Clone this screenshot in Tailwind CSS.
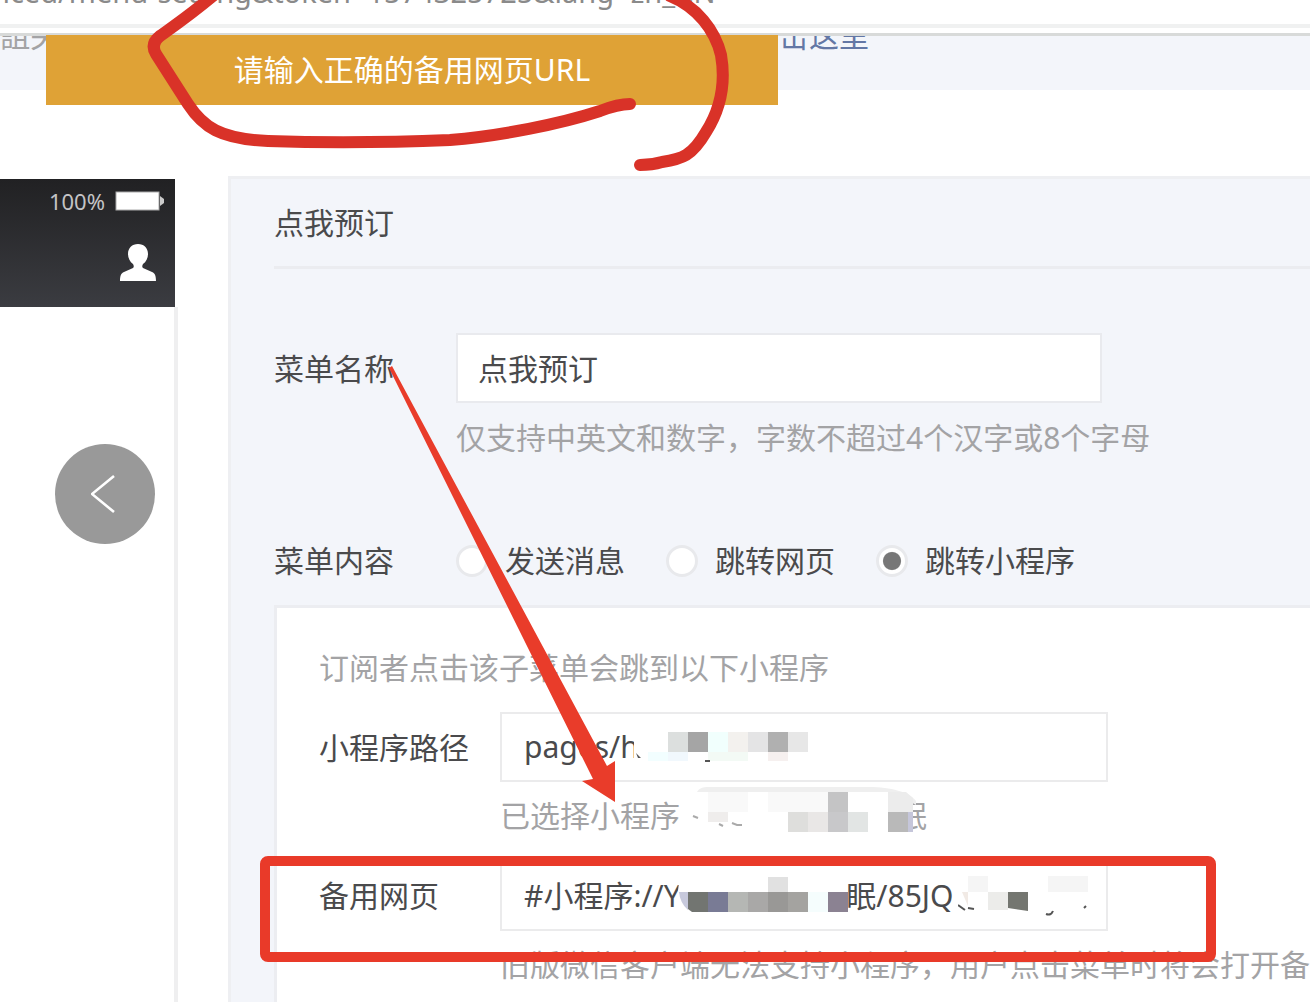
<!DOCTYPE html>
<html lang="zh-CN">
<head>
<meta charset="utf-8">
<title>自定义菜单</title>
<script src="https://cdn.jsdelivr.net/npm/@tailwindcss/browser@4"></script>
</head>
<body class="bg-white">
<div class="relative flex min-h-screen flex-col overflow-hidden pr-1.5 font-['Noto_Sans','Noto_Sans_CJK_SC',sans-serif] text-[30px] leading-10 text-[#4a4a4c]">

  <!-- address bar -->
  <header class="flex h-6 items-end overflow-hidden bg-white">
    <span class="mb-3 -ml-2 whitespace-nowrap text-[29px] text-[#8a8a8a]">nced/menu-setting&amp;token=1574325725&amp;lang=zh_CN</span>
  </header>
  <div class="h-3 border-t-4 border-b-3 border-t-[#f0f1f1] border-b-[#d8dad9] bg-white"></div>

  <!-- notice strip -->
  <div class="flex h-[54px] items-start justify-between overflow-hidden bg-[#f3f5fa]">
    <p class="-mt-5 whitespace-nowrap text-[#a3a3a5]">詛关</p>
    <a href="#" class="-mt-5 mr-[441px] whitespace-nowrap text-[#6377a5]">击这里</a>
  </div>

  <!-- warning toast -->
  <div role="alert" class="absolute top-[35px] left-[46px] flex h-[70px] w-[732px] items-center justify-center bg-[#dfa236] text-white"><span>请输入正确的备用网页URL</span></div>

  <main class="mt-[86px] flex flex-1">
    <!-- phone preview -->
    <section class="mt-[3px] flex w-[178px] shrink-0 flex-col">
      <div class="mr-[3px] h-32 bg-linear-to-b from-[#212123] to-[#3b3c41] pr-2.5">
        <div class="flex h-11 items-center justify-end gap-2.5">
          <span class="text-[22px] leading-6 text-[#c4c4c6]">100%</span>
          <svg class="h-5 w-[50px]" viewBox="0 0 50 20"><rect x="1" y="1" width="43" height="18" fill="#fff" stroke="#aaa"/><path d="M45 5l4 3v4l-4 3z" fill="#ccc"/></svg>
        </div>
        <div class="flex h-20 items-center justify-end pr-2">
          <svg class="h-[38px] w-10" viewBox="0 0 40 38" fill="#fff"><path d="M21 0c6 0 10 4 10 10 0 4-2 8-5 10-1 2-1 3 0 4l9 4c3 1 4 4 4 9H3c0-5 1-8 4-9l9-4c1-1 1-2 0-4-3-2-5-6-5-10C11 4 15 0 21 0z"/></svg>
        </div>
      </div>
      <div class="flex flex-1 items-start justify-end border-r-4 border-[#efeff0] pt-[137px] pr-[19px]">
        <button type="button" aria-label="返回" class="flex size-[100px] items-center justify-center rounded-full bg-[#999]">
          <svg class="h-10 w-7" viewBox="0 0 28 40" fill="none" stroke="#fff" stroke-width="2.6"><path d="M23 2L1 20l22 18"/></svg>
        </button>
      </div>
    </section>

    <!-- menu editor -->
    <form class="ml-[50px] flex min-w-0 flex-1 flex-col border-t-3 border-l-3 border-[#eeeff2] bg-[#f3f5fa] pl-[43px]">
      <h2 class="flex h-[90px] items-center border-b-3 border-[#ebecf0]">点我预订</h2>

      <div class="mt-16 flex">
        <label for="name" class="w-[182px] shrink-0 pt-4">菜单名称</label>
        <div class="min-w-0">
          <input id="name" value="点我预订" class="block h-[70px] w-[646px] border-2 border-[#e9eaee] bg-white px-5 pb-0.5">
          <p class="mt-[15px] whitespace-nowrap text-[#a3a3a5]">仅支持中英文和数字，字数不超过4个汉字或8个字母</p>
        </div>
      </div>

      <fieldset class="mt-[83px] flex">
        <legend class="float-left w-[182px]">菜单内容</legend>
        <div class="flex gap-[41px]">
          <label class="flex items-center gap-[17px]"><input type="radio" name="kind" class="size-8 appearance-none rounded-full border-3 border-[#e8e9ec] bg-white">发送消息</label>
          <label class="flex items-center gap-[17px]"><input type="radio" name="kind" class="size-8 appearance-none rounded-full border-3 border-[#e8e9ec] bg-white">跳转网页</label>
          <label class="flex items-center gap-[17px]"><input type="radio" name="kind" checked class="size-8 appearance-none rounded-full border-3 border-[#e8e9ec] bg-white checked:bg-radial checked:from-[#777] checked:from-46% checked:to-white checked:to-52% checked:bg-size-[26px_26px]">跳转小程序</label>
        </div>
      </fieldset>

      <div class="mt-6 flex-1 overflow-hidden border-t-3 border-l-3 border-[#ecedf1] bg-white pt-10 pl-[42px]">
        <p class="text-[#a3a3a5]">订阅者点击该子菜单会跳到以下小程序</p>

        <div class="mt-6 flex">
          <label for="path" class="w-[181px] shrink-0 pt-4">小程序路径</label>
          <div class="relative">
            <input id="path" value="pages/h" class="block h-[70px] w-[608px] border-2 border-[#ebebec] bg-white px-[22px] pb-0.5">
            <svg class="absolute top-4 left-[134px] h-9 w-[180px]" viewBox="634 728 180 36"><path fill="#fff" d="M634 728h180v36H634z"/><path fill="#dcdfde" d="M668 732h20v20h-20z"/><path fill="#a5a5a5" d="M688 732h20v20h-20z"/><path fill="#f1fffd" d="M708 732h20v20h-20z"/><path fill="#f3f1ee" d="M728 732h20v20h-20z"/><path fill="#e4e4e5" d="M748 732h20v20h-20z"/><path fill="#b0b0b0" d="M768 732h20v20h-20z"/><path fill="#e7e7e7" d="M788 732h20v20h-20z"/><path fill="#f2feff" d="M648 752h20v9h-20z"/><path fill="#f1f8fd" d="M668 752h20v9h-20z"/><path fill="#f3faf5" d="M708 752h40v9h-40z"/><path fill="#f6f0ef" d="M768 752h20v9h-20z"/><path fill="#555" d="M705 760h5v2h-5zM636 753l5 5h-3z"/></svg>
            <div class="mt-3.5 flex whitespace-nowrap text-[#a3a3a5]">
              <span>已选择小程序</span><span class="ml-[217px]">眠</span>
            </div>
            <svg class="absolute top-[74px] left-[184px] h-[50px] w-[246px]" viewBox="684 786 246 50"><path fill="#fff" d="M684 800l14-13h190l25 10v38H684z"/><path fill="#efefef" d="M697 792c2-4 6-5 12-5h160c22 0 40 5 47 14v4l-10-6-18-7z"/><path fill="#f9f9f9" d="M708 792h40v20h-40zM768 792h60v20h-60z"/><path fill="#efedec" d="M708 812h20v10h-20z"/><path fill="#c4c4c5" d="M828 792h20v20h-20z"/><path fill="#ececec" d="M888 792h18l7 6v14h-25z"/><path fill="#dededc" d="M788 812h20v20h-20z"/><path fill="#e9e7e6" d="M808 812h20v20h-20z"/><path fill="#c8c8ca" d="M828 812h20v20h-20z"/><path fill="#e2e5e4" d="M848 812h20v20h-20z"/><path fill="#b9b9b9" d="M888 812h20v20h-20z"/><path fill="#c5c6da" d="M908 812h5v20h-5z"/><path fill="none" stroke="#aaa" stroke-width="2" d="M693 816l5 2M719 824l4 2M732 823l5 2 5 0"/></svg>
          </div>
        </div>

        <div class="mt-[25px] flex">
          <label for="backup" class="w-[181px] shrink-0 pt-[15px]">备用网页</label>
          <div class="relative">
            <input id="backup" value="#小程序://Y　　　　　  眠/85JQ" class="block h-[70px] w-[608px] border-2 border-[#ebebec] bg-white px-[22px] pb-1">
            <svg class="absolute top-3 left-[178px] h-11 w-[172px]" viewBox="678 873 172 44"><path fill="#fff" d="M680 873h166v42H694q-14-6-16-24z"/><path fill="#e1e1e1" d="M768 877h20v15h-20z"/><path fill="#c7c9dc" d="M679 892h9v18q-8-7-9-18z"/><path fill="#727571" d="M688 892h20v20h-16l-4-3z"/><path fill="#797b95" d="M708 892h20v20h-20z"/><path fill="#b5b7b4" d="M728 892h20v20h-20z"/><path fill="#a9a8a7" d="M748 892h20v20h-20z"/><path fill="#999896" d="M768 892h20v20h-20z"/><path fill="#a4a3a0" d="M788 892h20v20h-20z"/><path fill="#f5fdfd" d="M808 892h20v20h-20z"/><path fill="#8b8292" d="M828 892h20v20h-20z"/></svg>
            <svg class="absolute top-3 left-[458px] h-11 w-[132px]" viewBox="958 873 132 44"><path fill="#fff" d="M960 874h124v38h-96q-22-2-28-22z"/><path fill="#f5f5f5" d="M968 876h20v16h-20zM1048 876h40v16h-40z"/><path fill="#f1eae5" d="M962 892h6v14z"/><path fill="#ececea" d="M988 892h20v18h-20z"/><path fill="#747670" d="M1008 892h20v19l-20-3z"/><path fill="none" stroke="#555" stroke-width="2" d="M958 905l7 5M968 908l6 1M1046 914q5 2 7-3M1084 908l2-2"/></svg>
            <p class="mt-3.5 whitespace-nowrap text-[#a3a3a5]">旧版微信客户端无法支持小程序，用户点击菜单时将会打开备</p>
          </div>
        </div>
      </div>
    </form>
  </main>

  <!-- hand-drawn annotations -->
  <svg class="pointer-events-none absolute top-0 left-0 h-[1002px] w-[1310px]" viewBox="0 0 1310 1002" fill="none" stroke-linecap="round" stroke-linejoin="round">
    <path stroke="#d93228" stroke-width="12" d="M214 -5C190 15 174 26 160 36Q150 44 156 54L188 104C203 127 220 139 268 141C330 143 400 142 450 140C500 136 560 124 600 111Q618 104 630 104M670 -4C697 7 715 30 721 55C726 84 720 110 706 132C692 156 682 159 662 162Q652 165 640 165"/>
    <path fill="#e93c2a" d="M389 368L392 366L607 766L615 761V802L582 781L593 779Z"/>
    <rect x="265" y="861" width="946" height="96" rx="3" stroke="#e93a29" stroke-width="10"/>
  </svg>
</div>
</body>
</html>
